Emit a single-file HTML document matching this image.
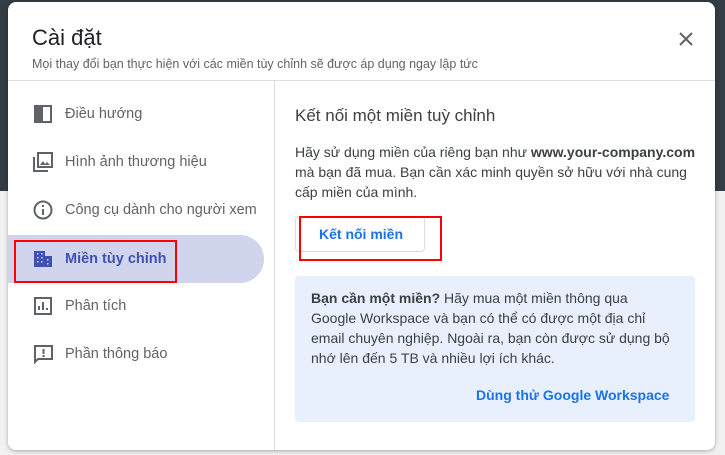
<!DOCTYPE html>
<html><head><meta charset="utf-8"><style>
*{margin:0;padding:0;box-sizing:border-box}
body{width:725px;height:455px;overflow:hidden;background:#f1f1f1;font-family:"Liberation Sans",Arial,sans-serif;position:relative}
.bgd{position:absolute;left:0;top:0;width:725px;height:191px;background:#343d43}
.dlg{position:absolute;left:8px;top:2px;width:707px;height:448px;background:#fff;border-radius:8px;box-shadow:0 1px 4px rgba(0,0,0,.3);overflow:hidden}
.abs{position:absolute}
.nav{position:absolute;left:0;width:256px;height:48px;display:flex;align-items:center;font-size:14.5px;color:#5f6368}
.nav svg{position:absolute;left:25px}
.nav span{position:absolute;left:57px}
p{color:#3c4043;font-size:14px;line-height:20px}
</style></head><body>
<div class="bgd"></div>
<div class="dlg">
 <div class="abs" style="left:24px;top:23px;font-size:22px;color:#202124">Cài đặt</div>
 <div class="abs" style="left:24px;top:55px;font-size:12.5px;color:#5f6368">Mọi thay đổi bạn thực hiện với các miền tùy chỉnh sẽ được áp dụng ngay lập tức</div>
 <svg class="abs" style="left:670px;top:29px" width="16" height="16" viewBox="0 0 16 16"><path d="M2 2L14 14M14 2L2 14" stroke="#5f6368" stroke-width="2"/></svg>
 <div class="abs" style="left:0;top:78px;width:707px;height:1px;background:#dadce0"></div>
 <div class="abs" style="left:266px;top:79px;width:1px;height:369px;background:#dadce0"></div>

 <div class="nav" style="top:88px"><svg width="20" height="20" viewBox="0 0 20 20"><rect x="1" y="1" width="18" height="18" fill="#5f6368"/><rect x="10" y="3" width="7" height="14" fill="#fff"/></svg><span>Điều hướng</span></div>
 <div class="nav" style="top:136px"><svg width="20" height="20" viewBox="0 0 20 20"><path d="M1 5v14h14" stroke="#5f6368" stroke-width="2" fill="none"/><rect x="5" y="1" width="14" height="14" fill="none" stroke="#5f6368" stroke-width="2"/><path d="M7 13l3-4 2 3 2-2 3 3z" fill="#5f6368"/></svg><span>Hình ảnh thương hiệu</span></div>
 <div class="nav" style="top:184px"><svg width="20" height="20" viewBox="0 0 20 20"><circle cx="10" cy="10" r="8.5" fill="none" stroke="#5f6368" stroke-width="2"/><rect x="9" y="9" width="2" height="6" fill="#5f6368"/><rect x="9" y="5" width="2" height="2" fill="#5f6368"/></svg><span>Công cụ dành cho người xem</span></div>
 <div class="abs" style="left:0;top:233px;width:256px;height:48px;background:#d0d4ec;border-radius:0 24px 24px 0"></div>
 <div class="nav" style="top:233px;color:#3f51b5;font-weight:bold"><svg width="20" height="20" viewBox="0 0 20 20"><rect x="1" y="2" width="11" height="16" fill="#3f51b5"/><rect x="12" y="7" width="7" height="11" fill="#3f51b5"/><g fill="#d0d4ec"><rect x="4" y="4" width="1.5" height="1.5"/><rect x="8" y="4" width="1.5" height="1.5"/><rect x="4" y="8" width="1.5" height="1.5"/><rect x="8" y="8" width="1.5" height="1.5"/><rect x="4" y="12" width="1.5" height="1.5"/><rect x="8" y="12" width="1.5" height="1.5"/><rect x="14" y="10" width="1.5" height="1.5"/><rect x="14" y="14" width="1.5" height="1.5"/></g></svg><span>Miền tùy chỉnh</span></div>
 <div class="abs" style="left:6px;top:238px;width:163px;height:43px;border:2px solid #f00"></div>
 <div class="nav" style="top:280px"><svg width="20" height="20" viewBox="0 0 20 20"><rect x="2" y="2" width="16" height="16" fill="none" stroke="#5f6368" stroke-width="2"/><path d="M6 14v-4M10 14V6M14 14v-2" stroke="#5f6368" stroke-width="2"/></svg><span>Phân tích</span></div>
 <div class="nav" style="top:328px"><svg width="20" height="20" viewBox="0 0 20 20"><path d="M2 2h17v13H5l-3 3z" fill="none" stroke="#5f6368" stroke-width="2"/><rect x="9.5" y="5" width="2" height="5" fill="#5f6368"/><rect x="9.5" y="11" width="2" height="2" fill="#5f6368"/></svg><span>Phần thông báo</span></div>

 <div class="abs" style="left:287px;top:104px;font-size:17px;color:#3c4043">Kết nối một miền tuỳ chỉnh</div>
 <p class="abs" style="left:287px;top:140px;width:410px">Hãy sử dụng miền của riêng bạn như <b>www.your-company.com</b> mà bạn đã mua. Bạn cần xác minh quyền sở hữu với nhà cung cấp miền của mình.</p>
 <div class="abs" style="left:287px;top:214px;width:130px;height:36px;border:1px solid #dadce0;border-radius:4px;color:#1a73e8;font-size:14px;font-weight:bold;padding:9px 0 0 23px">Kết nối miền</div>
 <div class="abs" style="left:291px;top:214px;width:143px;height:45px;border:2px solid #f00"></div>
 <div class="abs" style="left:287px;top:274px;width:400px;height:146px;background:#e8f0fe;border-radius:4px"></div>
 <p class="abs" style="left:303px;top:286px;width:362px">
 <b>Bạn cần một miền?</b> Hãy mua một miền thông qua Google Workspace và bạn có thể có được một địa chỉ email chuyên nghiệp. Ngoài ra, bạn còn được sử dụng bộ nhớ lên đến 5 TB và nhiều lợi ích khác.</p>
 <div class="abs" style="left:468px;top:385px;font-size:14px;color:#1a73e8;font-weight:bold">Dùng thử Google Workspace</div>
</div>
</body></html>
